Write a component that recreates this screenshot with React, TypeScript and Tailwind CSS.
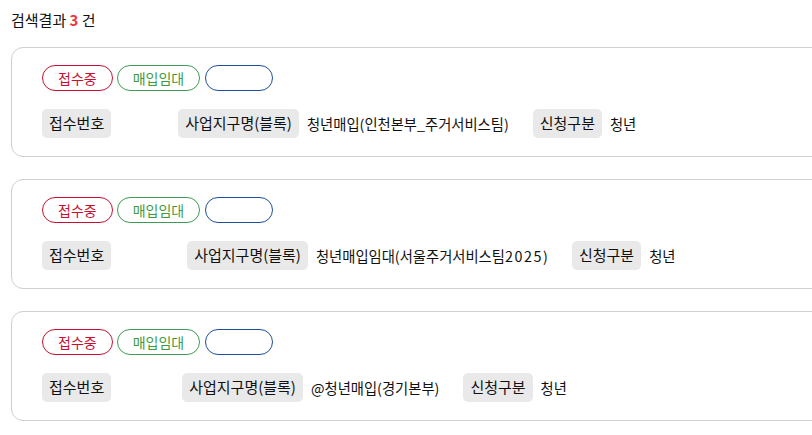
import React from "react";

type Item = { area: React.ReactNode; gap: number };

const items: Item[] = [
  { area: "청년매입(인천본부_주거서비스팀)", gap: 35 },
  {
    area: (
      <>
        청년매입임대(서울주거서비스팀<span className="tracking-[1.6px]">2025</span>)
      </>
    ),
    gap: 44,
  },
  { area: "@청년매입(경기본부)", gap: 39 },
];

function Label({ children }: { children: React.ReactNode }) {
  return (
    <span className="inline-flex h-[29px] items-center rounded-[5px] bg-[#e9e9e9] px-[7px] text-[15px] text-[#111]">
      {children}
    </span>
  );
}

function Card({ item }: { item: Item }) {
  return (
    <div className="w-[840px] rounded-[12px] border border-[#cfcfcf] bg-white pt-[17px] pb-[18px] pl-[30px]">
      <div className="flex items-center gap-[4px]">
        <span className="inline-flex h-[26px] items-center rounded-full border border-[#c8102e] px-[15px] text-[14px] text-[#c8102e]">
          접수중
        </span>
        <span className="inline-flex h-[26px] items-center rounded-full border border-[#3c9c55] px-[15px] text-[14px] text-[#3f9a3f]">
          매입임대
        </span>
        <span className="ml-[1px] inline-flex h-[26px] w-[68px] items-center rounded-full border border-[#1c4f9c]"></span>
      </div>
      <div className="mt-[18px] flex h-[29px] items-center text-[14.3px] text-[#111]">
        <Label>접수번호</Label>
        <span className="ml-[8px]" style={{ width: item.gap }}></span>
        <span className="ml-[24px]">
          <Label>사업지구명(블록)</Label>
        </span>
        <span className="ml-[8px]">{item.area}</span>
        <span className="ml-[24px]">
          <Label>신청구분</Label>
        </span>
        <span className="ml-[8px]">청년</span>
      </div>
    </div>
  );
}

export default function App() {
  return (
    <div
      className="h-[435px] w-[812px] overflow-hidden bg-white pl-[11px]"
      style={{ fontFamily: '"Noto Sans CJK KR", "Noto Sans", sans-serif' }}
    >
      <div className="pt-[9px] text-[15px] leading-[22px] text-[#111]">
        검색결과 <span className="font-bold text-[#e8383d]">3</span> 건
      </div>
      <div className="mt-[16px] flex flex-col gap-[22px]">
        {items.map((it, i) => (
          <Card key={i} item={it} />
        ))}
      </div>
    </div>
  );
}
